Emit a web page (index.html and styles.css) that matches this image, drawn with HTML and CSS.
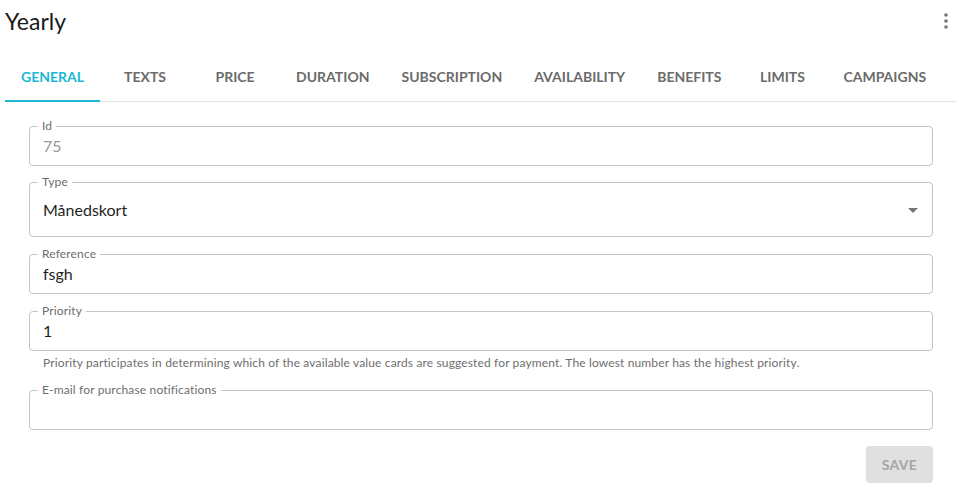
FILE: index.html
```html
<!DOCTYPE html>
<html>
<head>
<meta charset="utf-8">
<link rel="stylesheet" href="styles.css">
</head>
<body>
<div class="page">
  <header class="header">
    <h1 class="title">Yearly</h1>
    <button class="kebab" aria-label="More">
      <svg width="4" height="16" viewBox="0 0 4 16"><circle cx="2" cy="2" r="1.8"/><circle cx="2" cy="8" r="1.8"/><circle cx="2" cy="14" r="1.8"/></svg>
    </button>
  </header>
  <nav class="tabs">
    <div class="tab active">General</div>
    <div class="tab">Texts</div>
    <div class="tab">Price</div>
    <div class="tab">Duration</div>
    <div class="tab">Subscription</div>
    <div class="tab">Availability</div>
    <div class="tab">Benefits</div>
    <div class="tab">Limits</div>
    <div class="tab">Campaigns</div>
  </nav>
  <form class="form">
    <fieldset class="field id">
      <legend class="label">Id</legend>
      <div class="value disabled">75</div>
    </fieldset>
    <fieldset class="field select">
      <legend class="label">Type</legend>
      <div class="value">Månedskort</div>
      <span class="arrow"></span>
    </fieldset>
    <fieldset class="field">
      <legend class="label">Reference</legend>
      <div class="value">fsgh</div>
    </fieldset>
    <fieldset class="field">
      <legend class="label">Priority</legend>
      <div class="value">1</div>
    </fieldset>
    <p class="helper">Priority participates in determining which of the available value cards are suggested for payment. The lowest number has the highest priority.</p>
    <fieldset class="field email">
      <legend class="label">E-mail for purchase notifications</legend>
      <div class="value"></div>
    </fieldset>
    <div class="actions">
      <button type="button" class="save" disabled>Save</button>
    </div>
  </form>
</div>
</body>
</html>
```
FILE: styles.css
```css
* { box-sizing: border-box; }
html, body { margin: 0; padding: 0; background: #fff; }
body {
  font-family: Lato, "Noto Sans", sans-serif;
  color: #1f1f1f;
}
.page {
  padding: 0 2px 0 5px;
}
.header {
  display: flex;
  align-items: center;
  justify-content: space-between;
  height: 44px;
}
.title {
  margin: 0;
  font-size: 23px;
  font-weight: 400;
  color: #1a1a1a;
  line-height: 1;
  padding-bottom: 2px;
}
.kebab {
  border: 0;
  background: none;
  padding: 0;
  margin-right: 9px;
  display: flex;
  margin-top: -2px;
}
.kebab svg { fill: #757575; }
.tabs {
  display: flex;
  margin-top: 10px;
  border-bottom: 1px solid #e3e3e3;
  height: 48px;
}
.tab {
  min-width: 90px;
  padding: 0 16px 1px 16px;
  display: flex;
  align-items: center;
  justify-content: center;
  text-transform: uppercase;
  font-size: 14px;
  font-weight: 700;
  letter-spacing: 0;
  color: #6b6b6b;
  border-bottom: 2px solid transparent;
  margin-bottom: -1px;
}
.tab.active {
  color: #1cb7d3;
  border-bottom-color: #1cb7d3;
}
.form {
  padding: 18px 24px 0 24px;
  display: flex;
  flex-direction: column;
}
.field {
  margin: 0 0 11px 0;
  border: 1px solid #c4c4c4;
  border-radius: 4px;
  padding: 4px 13px 9px 13px;
  position: relative;
  min-width: 0;
}
.field.id { margin-bottom: 10px; }
.label {
  display: block;
  height: 12px;
  margin-left: -5px;
  padding: 0 4px 0 4px;
  font-size: 12px;
  letter-spacing: 0.15px;
  line-height: 12px;
  color: #6e6e6e;
}
.value {
  font-size: 16px;
  line-height: 20px;
  height: 20px;
  color: #1f1f1f;
}
.value.disabled { color: #9a9a9a; }
.select { padding-top: 12px; padding-bottom: 16px; }
.arrow {
  position: absolute;
  right: 14px;
  top: 20px;
  width: 0;
  height: 0;
  border-left: 5px solid transparent;
  border-right: 5px solid transparent;
  border-top: 5px solid #757575;
}
.helper {
  margin: -6px 0 0 14px;
  font-size: 12px;
  letter-spacing: 0.14px;
  line-height: 14px;
  color: #6e6e6e;
  height: 28px;
}
.email { padding-bottom: 9px; }
.actions {
  display: flex;
  justify-content: flex-end;
  margin-top: 5px;
}
.save {
  width: 67px;
  height: 37px;
  border: 0;
  border-radius: 4px;
  background: #e0e0e0;
  color: #a6a6a6;
  font-family: inherit;
  font-size: 14px;
  font-weight: 700;
  text-transform: uppercase;
  letter-spacing: 0.3px;
}
```
